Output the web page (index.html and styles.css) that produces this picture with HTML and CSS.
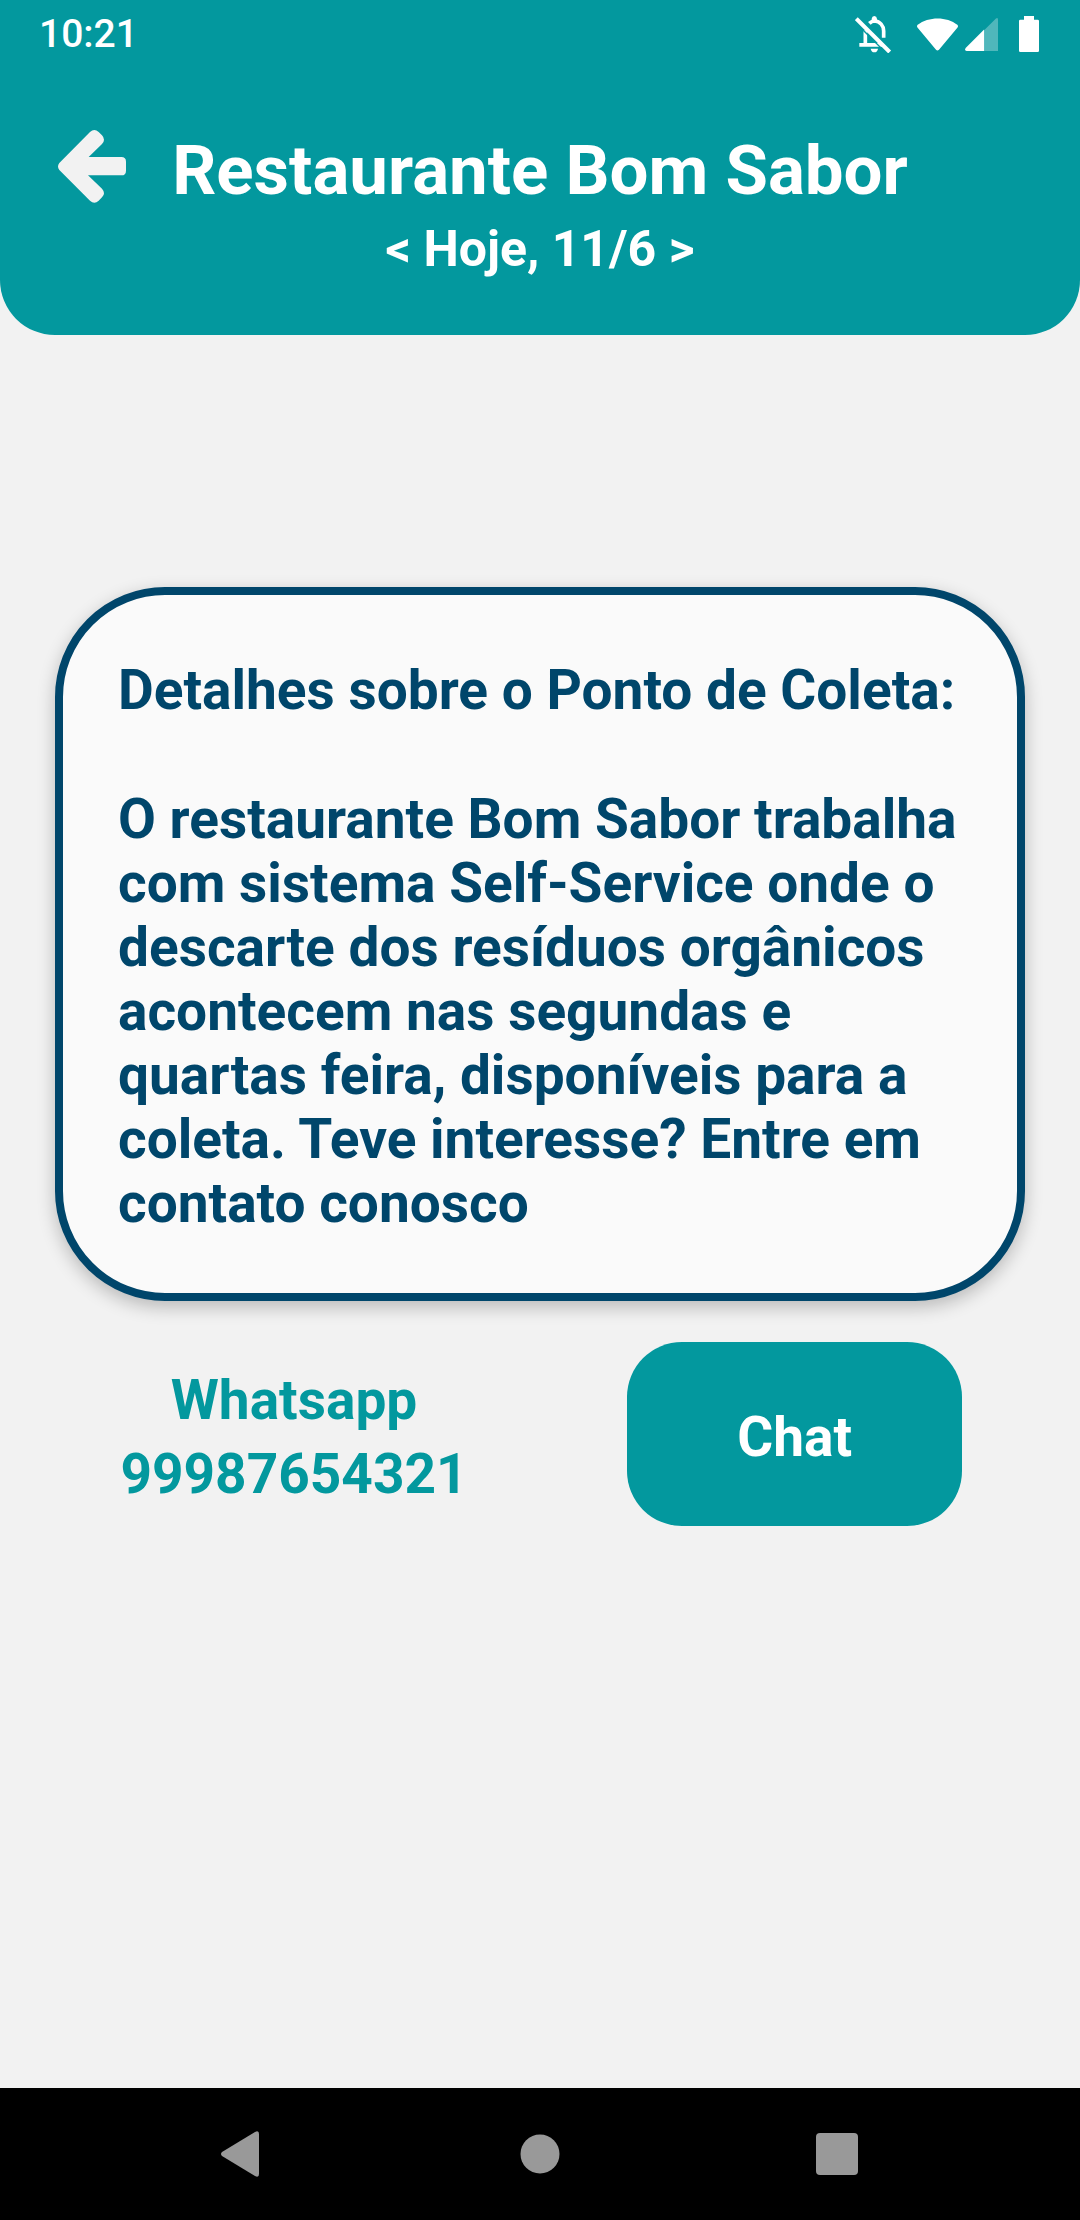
FILE: index.html
```html
<!DOCTYPE html>
<html lang="pt-BR">
<head>
  <meta charset="utf-8">
  <meta name="viewport" content="width=device-width, initial-scale=1">
  <title>Restaurante Bom Sabor</title>
  <link rel="stylesheet" href="styles.css">
</head>
<body>
  <div class="screen">
    <header class="header">
      <div class="status">
        <time class="clock">10:21</time>
        <div class="status-icons">
          <svg width="41" height="37" viewBox="107 45 123 111" aria-hidden="true">
            <path d="M138 88V132M120 131.500H188M150 67Q157 60 166 60C182 61 193 74 193 90V110" fill="none" stroke="#fff" stroke-width="11"/>
            <path d="M157 62V53Q158 45 165 45T173 53V62Z" fill="#fff"/>
            <path d="M154 143H176Q174 154 165 154T154 143Z" fill="#fff"/>
            <path d="M104 60L205 161" stroke="#03989e" stroke-width="4"/>
            <path d="M111 53L211 153" stroke="#fff" stroke-width="12"/>
          </svg>
          <div class="network">
            <svg width="41" height="33" viewBox="290 46 125 99" aria-hidden="true">
              <path d="M292 66C325 40 381 40 413 66Q417 70 413 75L357 142Q352 147 348 142L292 75Q288 70 292 66Z" fill="#fff"/>
            </svg>
            <svg width="33" height="33" viewBox="434 51 100 100" aria-hidden="true">
              <path d="M492 88L527 53Q534 48 534 56V151H492Z" fill="#fff" fill-opacity=".3"/>
              <path d="M492 86V151H439Q431 150 436 142Z" fill="#fff"/>
            </svg>
          </div>
          <svg width="20" height="36" viewBox="597 45 60 108" aria-hidden="true">
            <path d="M612 45H642V56H653Q657 56 657 60V149Q657 153 653 153H601Q597 153 597 149V60Q597 56 601 56H612Z" fill="#fff"/>
          </svg>
        </div>
      </div>
      <div class="title-bar">
        <button class="back" type="button" aria-label="Voltar">
          <svg width="68" height="73" viewBox="174 390 204 219" aria-hidden="true">
            <path d="M178 489L270 396Q283 384 296 396L306 406Q318 419 306 432L266 471H364Q378 471 378 485V512Q378 526 364 526H264L306 566Q318 580 306 592L296 602Q283 614 270 602L178 510Q170 499 178 489Z" fill="#f2f2f2"/>
          </svg>
        </button>
        <h1 class="title">Restaurante Bom Sabor</h1>
      </div>
      <p class="date">&lt; Hoje, 11/6 &gt;</p>
    </header>

    <main class="content">
      <section class="card">
        <h2 class="card-text">Detalhes sobre o Ponto de Coleta:</h2>
        <p class="card-text">O restaurante Bom Sabor trabalha com sistema Self-Service onde o descarte dos resíduos orgânicos acontecem nas segundas e quartas feira, disponíveis para a coleta. Teve interesse? Entre em contato conosco</p>
      </section>
      <div class="actions">
        <div class="contact">
          <span>Whatsapp</span>
          <span>99987654321</span>
        </div>
        <button class="chat" type="button">Chat</button>
      </div>
    </main>

    <nav class="system-nav" aria-label="Sistema">
      <button class="nav-button" type="button" aria-label="Voltar à tela anterior">
        <svg width="44" height="46" viewBox="0 0 44 46" aria-hidden="true">
          <path d="M1 21L34 1Q38 -1 38 3V43Q38 47 34 45L1 25Q-1 23 1 21Z" fill="#999"/>
        </svg>
      </button>
      <button class="nav-button" type="button" aria-label="Início">
        <svg width="40" height="40" viewBox="0 0 40 40" aria-hidden="true">
          <circle cx="20" cy="20" r="19.500" fill="#999"/>
        </svg>
      </button>
      <button class="nav-button" type="button" aria-label="Recentes">
        <svg width="42" height="42" viewBox="0 0 42 42" aria-hidden="true">
          <rect width="42" height="42" rx="4" fill="#999"/>
        </svg>
      </button>
    </nav>
  </div>
</body>
</html>
```

FILE: styles.css
```css
:root {
  --teal: #03989e;
  --navy: #00466b;
  --page: #f2f2f2;
}

* {
  box-sizing: border-box;
}

body {
  margin: 0;
  background: var(--page);
  font-family: Roboto, sans-serif;
  font-weight: 700;
}

h1,
h2,
p {
  margin: 0;
}

button {
  padding: 0;
  border: 0;
  background: none;
  color: inherit;
  font: inherit;
  cursor: pointer;
}

svg {
  display: block;
}

.screen {
  display: flex;
  flex-direction: column;
  min-height: 100vh;
}

.header {
  padding-bottom: 57px;
  border-radius: 0 0 55px 55px;
  background: var(--teal);
  color: #fff;
}

.status {
  display: flex;
  justify-content: space-between;
  align-items: center;
  height: 68px;
  padding: 0 41px 0 39px;
}

.clock {
  font-size: 39px;
  font-weight: 500;
  line-height: 46px;
}

.status-icons {
  display: flex;
  align-items: center;
  gap: 21px;
}

.network {
  display: flex;
  align-items: center;
  gap: 7px;
}

.title-bar {
  display: grid;
  grid-template-columns: 1fr auto 1fr;
  align-items: start;
  padding: 62px 58px 0;
}

.back {
  justify-self: start;
}

.title {
  font-size: 69px;
  line-height: 81px;
}

.date {
  margin-top: 9px;
  font-size: 50px;
  line-height: 58px;
  text-align: center;
}

.content {
  flex: 1;
  padding: 252px 55px 55px;
}

.card {
  display: grid;
  gap: 65px;
  padding: 63px 55px 58px;
  border: 8px solid var(--navy);
  border-radius: 110px;
  background: #fafafa;
  box-shadow: 0 6px 18px rgba(0, 0, 0, 0.24);
  color: var(--navy);
}

.card-text {
  font-size: 55px;
  font-weight: 700;
  line-height: 64px;
}

.actions {
  display: flex;
  justify-content: space-between;
  align-items: center;
  margin-top: 41px;
  padding: 0 63px;
  font-size: 55px;
  line-height: 64px;
}

.contact {
  display: grid;
  gap: 10px;
  min-width: 352px;
  padding-top: 6px;
  color: var(--teal);
  text-align: center;
}

.chat {
  padding: 63px 110px 57px;
  border-radius: 55px;
  background: var(--teal);
  color: #fff;
}

.system-nav {
  display: grid;
  grid-template-columns: repeat(3, 1fr);
  height: 132px;
  padding: 0 94px;
  background: #000;
}

.nav-button {
  display: grid;
  place-items: center;
}
```
